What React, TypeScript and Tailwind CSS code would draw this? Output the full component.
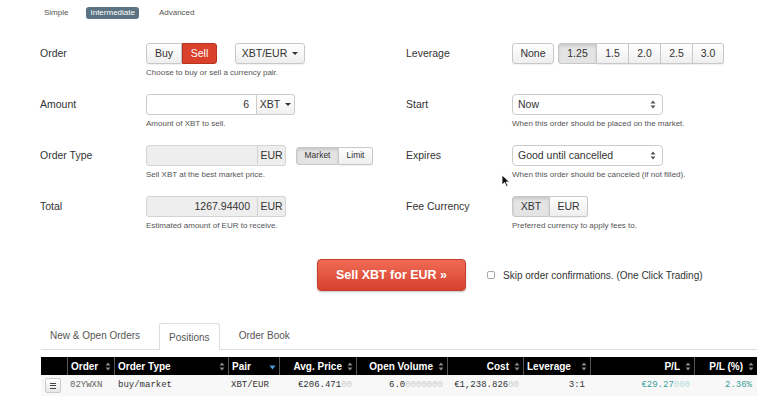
import type { ReactNode } from 'react';

const LEVERAGE = ['1.25', '1.5', '2.0', '2.5', '3.0'];
const LEVERAGE_W = ['w-[39px]', 'w-[32px]', 'w-[32px]', 'w-[32px]', 'w-[31px]'];

const btnBase =
  'h-full flex items-center justify-center border border-[#c8c8c8] text-[#333] bg-linear-to-b from-white to-[#eeeeee] shadow-[0_1px_1px_rgba(0,0,0,0.06)]';
const btnActive =
  'h-full flex items-center justify-center border border-[#c8c8c8] text-[#333] bg-[#e4e4e4] shadow-[inset_0_2px_3px_rgba(0,0,0,0.12)]';

function Caret() {
  return <span className="inline-block ml-[5px] border-x-[3px] border-x-transparent border-t-[3px] border-t-[#333]" />;
}

function SelectArrows() {
  return (
    <svg width="6" height="9" viewBox="0 0 6 9" className="text-[#555]">
      <path d="M3 0.5L5.5 3.5H0.5Z" fill="currentColor" />
      <path d="M3 8.5L5.5 5.5H0.5Z" fill="currentColor" />
    </svg>
  );
}

function SortIcon({ active }: { active?: boolean }) {
  if (active) {
    return (
      <svg width="7" height="9" viewBox="0 0 7 9">
        <path d="M0.5 3.5H6.5L3.5 7.5Z" fill="#4aa3d8" />
      </svg>
    );
  }
  return (
    <svg width="6" height="9" viewBox="0 0 6 9">
      <path d="M3 0.5L5.5 3.5H0.5Z" fill="#8a8a8a" />
      <path d="M3 8.5L5.5 5.5H0.5Z" fill="#8a8a8a" />
    </svg>
  );
}

function Field({ label, help, children }: { label: string; help?: string; children: ReactNode }) {
  return (
    <div className="flex h-[51px]">
      <div className="w-[106px] h-[21px] flex items-center text-[10.5px] text-[#333]">{label}</div>
      <div className="flex flex-col">
        <div className="h-[21px] flex items-center">{children}</div>
        {help && <div className="mt-[4px] text-[8px] leading-[10px] text-[#555]">{help}</div>}
      </div>
    </div>
  );
}

function HeadCell({ children, right, active, first }: { children?: ReactNode; right?: boolean; active?: boolean; first?: boolean }) {
  return (
    <div
      className={`h-full flex items-center px-[3px] gap-[5px] ${first ? '' : 'border-l border-[#555]'} ${
        right ? 'justify-end' : 'justify-between'
      }`}
    >
      {children && <span>{children}</span>}
      {children && <SortIcon active={active} />}
    </div>
  );
}

export default function App() {
  return (
    <div className="w-[773px] h-[402px] bg-white overflow-hidden relative font-['Liberation_Sans',Arial,sans-serif] text-[#333]">
      {/* view switcher */}
      <div className="flex items-center pl-[44px] pt-[7px] h-[19px] text-[8px] text-[#555]">
        <span>Simple</span>
        <span className="ml-[18px] h-[12px] px-[4px] rounded-[3px] bg-[#5b7282] text-white flex items-center">Intermediate</span>
        <span className="ml-[20px]">Advanced</span>
      </div>

      {/* order form */}
      <div className="grid grid-cols-[366px_1fr] pl-[40px] pt-[24px]">
        <div>
          <Field label="Order" help="Choose to buy or sell a currency pair.">
            <div className="flex h-full text-[10.5px]">
              <div className={`${btnBase} w-[36px] rounded-l-[3px]`}>Buy</div>
              <div className="h-full w-[35px] flex items-center justify-center rounded-r-[3px] border border-[#b5321f] bg-[#d9412c] text-white">
                Sell
              </div>
              <div className={`${btnBase} ml-[18px] w-[70px] rounded-[3px]`}>
                XBT/EUR
                <Caret />
              </div>
            </div>
          </Field>
          <Field label="Amount" help="Amount of XBT to sell.">
            <div className="flex h-full text-[10.5px]">
              <div className="w-[111px] h-full border border-[#ccc] rounded-l-[3px] bg-white flex items-center justify-end pr-[7px]">6</div>
              <div className="w-[38px] h-full border border-l-0 border-[#ccc] rounded-r-[3px] bg-linear-to-b from-white to-[#f0f0f0] flex items-center justify-center">
                XBT
                <Caret />
              </div>
            </div>
          </Field>
          <Field label="Order Type" help="Sell XBT at the best market price.">
            <div className="flex h-full text-[10.5px] items-center">
              <div className="w-[112px] h-full border border-[#d4d4d4] rounded-l-[3px] bg-[#eeeeee]" />
              <div className="w-[28px] h-full border border-l-0 border-[#d4d4d4] rounded-r-[3px] bg-[#eeeeee] flex items-center justify-center">EUR</div>
              <div className="flex ml-[10px] h-[18px] text-[8.5px]">
                <div className={`${btnActive} w-[43px] rounded-l-[3px]`}>Market</div>
                <div className={`${btnBase} w-[34px] border-l-0 rounded-r-[3px]`}>Limit</div>
              </div>
            </div>
          </Field>
          <Field label="Total" help="Estimated amount of EUR to receive.">
            <div className="flex h-full text-[10.5px]">
              <div className="w-[112px] h-full border border-[#d4d4d4] rounded-l-[3px] bg-[#eeeeee] flex items-center justify-end pr-[7px]">
                1267.94400
              </div>
              <div className="w-[28px] h-full border border-l-0 border-[#d4d4d4] rounded-r-[3px] bg-[#eeeeee] flex items-center justify-center">EUR</div>
            </div>
          </Field>
        </div>

        <div>
          <Field label="Leverage">
            <div className="flex h-full text-[10.5px]">
              <div className={`${btnBase} w-[42px] rounded-[3px]`}>None</div>
              <div className="flex h-full ml-[4px]">
                {LEVERAGE.map((v, i) => (
                  <div
                    key={v}
                    className={`${i === 0 ? btnActive : btnBase} ${LEVERAGE_W[i]} ${i > 0 ? 'border-l-0' : 'rounded-l-[3px]'} ${
                      i === LEVERAGE.length - 1 ? 'rounded-r-[3px]' : ''
                    }`}
                  >
                    {v}
                  </div>
                ))}
              </div>
            </div>
          </Field>
          <Field label="Start" help="When this order should be placed on the market.">
            <div className="w-[151px] h-full border border-[#ccc] rounded-[4px] bg-white flex items-center justify-between pl-[5px] pr-[6px] text-[10.5px]">
              Now
              <SelectArrows />
            </div>
          </Field>
          <Field label="Expires" help="When this order should be canceled (if not filled).">
            <div className="w-[151px] h-full border border-[#ccc] rounded-[4px] bg-white flex items-center justify-between pl-[5px] pr-[6px] text-[10.5px]">
              Good until cancelled
              <SelectArrows />
            </div>
          </Field>
          <Field label="Fee Currency" help="Preferred currency to apply fees to.">
            <div className="flex h-full text-[10.5px]">
              <div className={`${btnActive} w-[38px] rounded-l-[3px]`}>XBT</div>
              <div className={`${btnBase} w-[38px] border-l-0 rounded-r-[3px]`}>EUR</div>
            </div>
          </Field>
        </div>
      </div>

      {/* submit */}
      <div className="flex items-center pl-[317px] mt-[12px]">
        <div className="w-[149px] h-[32px] rounded-[4px] border border-[#c4402d] bg-linear-to-b from-[#f06a55] to-[#d6412d] shadow-[0_1px_2px_rgba(0,0,0,0.25)] flex items-center justify-center text-white font-bold text-[12.5px]">
          Sell XBT for EUR »
        </div>
        <div className="ml-[21px] w-[8px] h-[8px] border border-[#aaa] rounded-[2px] bg-white" />
        <span className="ml-[8px] text-[10px] text-[#333]">Skip order confirmations. (One Click Trading)</span>
      </div>

      {/* tabs */}
      <div className="mx-[41px] w-[716px] mt-[30px] flex items-end gap-[10px] border-b border-[#ddd] h-[29px] text-[10px] text-[#555]">
        <div className="px-[9px] h-full flex items-center">New &amp; Open Orders</div>
        <div className="px-[9px] h-[27px] -mb-px flex items-center border border-b-0 border-[#ddd] rounded-t-[3px] bg-white">Positions</div>
        <div className="px-[9px] h-full flex items-center">Order Book</div>
      </div>

      {/* positions table */}
      <div className="mx-[41px] w-[716px] mt-[7px]">
        <div className="grid grid-cols-[26px_47px_114px_51px_77px_91px_76px_67px_104px_63px] h-[18px] bg-black text-white font-bold text-[10px]">
          <HeadCell first />
          <HeadCell>Order</HeadCell>
          <HeadCell>Order Type</HeadCell>
          <HeadCell active>Pair</HeadCell>
          <HeadCell right>Avg. Price</HeadCell>
          <HeadCell right>Open Volume</HeadCell>
          <HeadCell right>Cost</HeadCell>
          <HeadCell>Leverage</HeadCell>
          <HeadCell right>P/L</HeadCell>
          <HeadCell right>P/L (%)</HeadCell>
        </div>
        <div className="grid grid-cols-[26px_47px_114px_51px_77px_91px_76px_67px_104px_63px] h-[21px] bg-[#f8f8f8] items-center font-['Liberation_Mono',monospace] text-[9px] text-[#333]">
          <div className="flex items-center pl-[4px]">
            <div className="w-[16px] h-[15px] rounded-[2px] border border-[#ccc] bg-linear-to-b from-white to-[#e8e8e8] flex flex-col items-center justify-center gap-[1.5px]">
              <span className="w-[6px] h-px bg-[#444]" />
              <span className="w-[6px] h-px bg-[#444]" />
              <span className="w-[6px] h-px bg-[#444]" />
            </div>
          </div>
          <div className="pl-[3px] text-[#666]">02YWXN</div>
          <div className="pl-[4px]">buy/market</div>
          <div className="pl-[3px]">XBT/EUR</div>
          <div className="text-right pr-[4px]">
            €206.471<span className="text-[#ccc]">00</span>
          </div>
          <div className="text-right pr-[4px]">
            6.0<span className="text-[#ccc]">0000000</span>
          </div>
          <div className="text-right pr-[4px]">
            €1,238.826<span className="text-[#ccc]">00</span>
          </div>
          <div className="text-right pr-[5px]">3:1</div>
          <div className="text-right pr-[4px] text-[#3a9e98]">
            €29.27<span className="text-[#b9dcda]">000</span>
          </div>
          <div className="text-right pr-[5px] text-[#3a9e98]">2.36%</div>
        </div>
      </div>

      {/* mouse pointer */}
      <svg className="absolute left-[501px] top-[174px]" width="9" height="13" viewBox="0 0 9 13">
        <path d="M1 1V11L3.5 8.5L5.5 12.5L7 11.8L5 8H8.5Z" fill="#111" stroke="#fff" strokeWidth="0.8" />
      </svg>
    </div>
  );
}
